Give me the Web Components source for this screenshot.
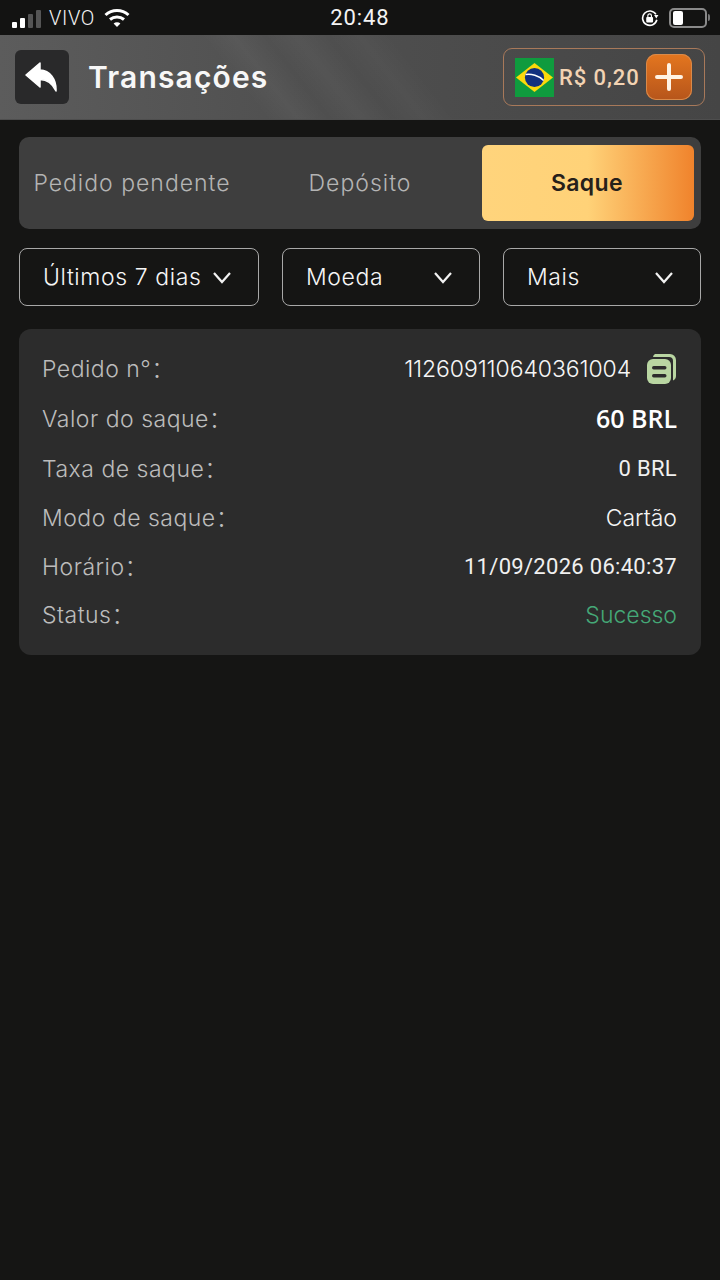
<!DOCTYPE html>
<html lang="pt-BR">
<head>
<meta charset="utf-8">
<title>Transações</title>
<style>
  html, body { margin: 0; height: 100%; }
  body {
    width: 720px;
    height: 1280px;
    overflow: hidden;
    background: #151514;
    font-family: Inter, "Noto Sans", "Noto Sans CJK SC", sans-serif;
    color: #fff;
  }
</style>
</head>
<body>
<status-bar></status-bar>
<app-header title-text="Transações" balance="R$ 0,20"></app-header>
<tab-bar>
  <tab-item style="width:226px">Pedido pendente</tab-item>
  <tab-item style="width:226px;padding-left:4px">Depósito</tab-item>
  <tab-item active style="width:212px">Saque</tab-item>
</tab-bar>
<filter-row>
  <filter-select style="width:240px">Últimos 7 dias</filter-select>
  <filter-select style="width:198px">Moeda</filter-select>
  <filter-select style="width:198px">Mais</filter-select>
</filter-row>
<order-card>
  <order-row label="Pedido n°" h="51" copy>112609110640361004</order-row>
  <order-row label="Valor do saque" h="50" strong>60 BRL</order-row>
  <order-row label="Taxa de saque" h="50" roboto>0 BRL</order-row>
  <order-row label="Modo de saque" h="48">Cartão</order-row>
  <order-row label="Horário" h="49" roboto>11/09/2026 06:40:37</order-row>
  <order-row label="Status" h="48" ok>Sucesso</order-row>
</order-card>

<script>
class StatusBar extends HTMLElement {
  constructor() {
    super();
    this.attachShadow({ mode: 'open' });
    this.shadowRoot.innerHTML = `
      <style>
        :host {
          display: flex;
          align-items: center;
          height: 35px;
          padding: 0 0 0 12px;
          background: #131312;
          font-family: Roboto, sans-serif;
          color: #f4f4f4;
          position: relative;
        }
        .signal { display: flex; align-items: flex-end; gap: 3px; height: 19px; margin-top: 1px; }
        .signal i { width: 5px; background: #fff; border-radius: 1px; }
        .signal i.off { background: #555; }
        .carrier { font-size: 20px; font-weight: 300; margin-left: 8px; letter-spacing: .6px; }
        .wifi { margin-left: 9px; }
        .time {
          position: absolute; left: 0; right: 0; top: 5px;
          text-align: center; font-size: 22px; font-weight: 400; letter-spacing: .9px; line-height: 26px;
        }
        .right { margin-left: auto; display: flex; align-items: center; margin-right: 10px; }
        .batt {
          margin-left: 10px; border: 2px solid #8a8a8a; border-radius: 5px;
          padding: 1px 2px; width: 30px; height: 14px;
        }
        .batt b { display: block; width: 10px; height: 14px; background: #fff; border-radius: 2px; }
        .nub { width: 2px; height: 7px; background: #777; margin-left: 1px; border-radius: 0 2px 2px 0; }
      </style>
      <div class="signal">
        <i style="height:6px"></i><i style="height:10px"></i><i class="off" style="height:14px"></i><i class="off" style="height:18px"></i>
      </div>
      <span class="carrier">VIVO</span>
      <svg class="wifi" width="26" height="20" viewBox="0 0 26 20" fill="none" stroke="#fff" stroke-width="3">
        <path d="M1.5 7 C8 1 18 1 24.5 7"/>
        <path d="M6 11.5 C10 8 16 8 20 11.5"/>
        <path d="M13 19 L9.6 15.4 C11.5 13.8 14.5 13.8 16.4 15.4 Z" fill="#fff" stroke="none"/>
      </svg>
      <span class="time">20:48</span>
      <div class="right">
        <svg width="18" height="18" viewBox="0 0 20 20" fill="none">
          <path d="M16.6 6 A8 8 0 1 0 17.6 12" stroke="#fff" stroke-width="1.8"/>
          <path d="M14.6 6.6 L19.4 6.8 L17 10.6 Z" fill="#fff"/>
          <rect x="5.8" y="9" width="7.6" height="6" rx="1" fill="#fff"/>
          <path d="M7.6 9 V7.4 a2 2 0 0 1 4 0 V9" stroke="#fff" stroke-width="1.3"/>
        </svg>
        <div class="batt"><b></b></div>
        <div class="nub"></div>
      </div>`;
  }
}
customElements.define('status-bar', StatusBar);

class AppHeader extends HTMLElement {
  constructor() {
    super();
    this.attachShadow({ mode: 'open' });
    this.shadowRoot.innerHTML = `
      <style>
        :host {
          display: flex;
          align-items: center;
          height: 85px;
          box-sizing: border-box;
          padding: 0 15px;
          background:
            linear-gradient(52deg,
              rgba(255,255,255,0) 34%, rgba(255,255,255,.035) 38%, rgba(255,255,255,0) 42%,
              rgba(255,255,255,.03) 46%, rgba(255,255,255,0) 50%,
              rgba(255,255,255,.025) 54%, rgba(255,255,255,0) 58%),
            linear-gradient(90deg, #5c5c5c 0%, #505050 40%, #454545 100%);
          border-bottom: 1px solid #4e4e4e;
        }
        .back {
          width: 54px; height: 54px; border-radius: 6px; background: #29292a;
          display: flex; align-items: center; justify-content: center;
        }
        h1 {
          margin: 0 0 0 19px; font-size: 30px; font-weight: 600; letter-spacing: 1.15px; color: #f7f7f7;
        }
        .wallet {
          margin-left: auto;
          width: 202px; height: 58px; box-sizing: border-box;
          border: 1px solid #a8795a; border-radius: 9px;
          display: flex; align-items: center; padding: 0 12px 0 11px;
        }
        .amount {
          font-family: Roboto, sans-serif; font-size: 22px; font-weight: 500;
          color: #f2d3b3; margin-left: 5px; letter-spacing: .9px; white-space: nowrap;
        }
        .plus {
          margin-left: auto; width: 46px; height: 46px; border-radius: 10px;
          background: linear-gradient(180deg, #e4761f, #b6551b);
          box-shadow: inset 0 0 0 1px #d98a4a;
          display: flex; align-items: center; justify-content: center;
        }
      </style>
      <div class="back">
        <svg width="34" height="30" viewBox="0 0 34 30">
          <path fill="#fff" d="M15 1 L1 13 L15 25 V17.5 C22 17.5 27 20.5 31 29 C31.5 17 25 8.5 15 8 Z" stroke="#fff" stroke-linejoin="round" stroke-width="1.5"/>
        </svg>
      </div>
      <h1></h1>
      <div class="wallet">
        <svg width="39" height="39" viewBox="0 0 39 39" style="flex:none">
          <rect width="39" height="39" fill="#0f9b3e"/>
          <path d="M19.5 5 L38 19.5 L19.5 34 L1 19.5 Z" fill="#fbd90b"/>
          <circle cx="19.5" cy="19.5" r="9.6" fill="#12307f"/>
          <path d="M10.5 16.5 C16 15.5 24 17.5 28.6 22.4" fill="none" stroke="#fff" stroke-width="1.4"/>
        </svg>
        <span class="amount"></span>
        <div class="plus">
          <svg width="28" height="28" viewBox="0 0 28 28"><path d="M14 2 V26 M2 14 H26" stroke="#fff3e4" stroke-width="4" stroke-linecap="round"/></svg>
        </div>
      </div>`;
  }
  connectedCallback() {
    this.shadowRoot.querySelector('h1').textContent = this.getAttribute('title-text');
    this.shadowRoot.querySelector('.amount').textContent = this.getAttribute('balance');
  }
}
customElements.define('app-header', AppHeader);

class TabBar extends HTMLElement {
  constructor() {
    super();
    this.attachShadow({ mode: 'open' });
    this.shadowRoot.innerHTML = `
      <style>
        :host {
          display: flex;
          margin: 17px 19px 0;
          height: 92px;
          padding: 8px 7px 8px 0;
          box-sizing: border-box;
          background: #3e3e3e;
          border-radius: 10px;
        }
        ::slotted(tab-item) { flex: none; }
      </style>
      <slot></slot>`;
  }
}
customElements.define('tab-bar', TabBar);

class TabItem extends HTMLElement {
  constructor() {
    super();
    this.attachShadow({ mode: 'open' });
    this.shadowRoot.innerHTML = `
      <style>
        :host {
          display: flex; align-items: center; justify-content: center;
          font-size: 23px; font-weight: 300; color: #b4b4b4; white-space: nowrap; letter-spacing: 1px;
          border-radius: 6px; box-sizing: border-box;
        }
        :host([active]) {
          background: linear-gradient(90deg, #ffd47c 0%, #ffd278 50%, #f0832c 100%);
          color: #26201a; font-weight: 600; letter-spacing: .4px;
          margin-left: 11px; padding-right: 2px;
        }
      </style>
      <slot></slot>`;
  }
}
customElements.define('tab-item', TabItem);

class FilterRow extends HTMLElement {
  constructor() {
    super();
    this.attachShadow({ mode: 'open' });
    this.shadowRoot.innerHTML = `
      <style>
        :host { display: flex; gap: 23px; margin: 19px 19px 0; }
        ::slotted(filter-select) { flex: none; }
      </style>
      <slot></slot>`;
  }
}
customElements.define('filter-row', FilterRow);

class FilterSelect extends HTMLElement {
  constructor() {
    super();
    this.attachShadow({ mode: 'open' });
    this.shadowRoot.innerHTML = `
      <style>
        :host {
          display: flex; align-items: center; justify-content: space-between;
          height: 58px; box-sizing: border-box; padding: 0 26px 0 23px;
          border: 1px solid #a8a8a8; border-radius: 8px;
          font-size: 23px; font-weight: 300; color: #f6f6f6; letter-spacing: .6px; white-space: nowrap;
        }
        svg { flex: none; margin-top: 1px; }
      </style>
      <slot></slot>
      <svg width="20" height="13" viewBox="0 0 20 13" fill="none">
        <path d="M2 2 L10 11 L18 2" stroke="#f2f2f2" stroke-width="2.2"/>
      </svg>`;
  }
}
customElements.define('filter-select', FilterSelect);

class OrderCard extends HTMLElement {
  constructor() {
    super();
    this.attachShadow({ mode: 'open' });
    this.shadowRoot.innerHTML = `
      <style>
        :host {
          display: block; margin: 23px 19px 0; height: 326px; box-sizing: border-box;
          padding: 14px 24px 0 23px;
          background: #2c2c2c; border-radius: 12px;
        }
      </style>
      <slot></slot>`;
  }
}
customElements.define('order-card', OrderCard);

class OrderRow extends HTMLElement {
  constructor() {
    super();
    this.attachShadow({ mode: 'open' });
    this.shadowRoot.innerHTML = `
      <style>
        :host {
          display: flex; align-items: center; justify-content: space-between;
          font-size: 23px; font-weight: 300; color: #bcbcbc; white-space: nowrap;
        }
        .label { letter-spacing: .5px; line-height: 30px; }
        .value { color: #f6f6f6; display: flex; align-items: center; line-height: 30px; letter-spacing: 0; }
        :host([copy]) .value { letter-spacing: -.1px; }
        :host([strong]) .value { font-weight: 600; font-size: 25px; font-family: "Open Sans", sans-serif; color: #fff; padding-bottom: 2px; }
        :host([roboto]) .value { font-family: Roboto, sans-serif; font-size: 22px; font-weight: 400; letter-spacing: .3px; color: #f0f0f0; }
        :host([ok]) .value { color: #45a877; }
        svg { display: none; margin-left: 15px; }
        :host([copy]) svg { display: block; }
      </style>
      <span class="label"></span>
      <span class="value"><slot></slot>
        <svg width="31" height="31" viewBox="0 0 31 31">
          <path d="M9 1 H24 a6 6 0 0 1 6 6 V23 a5 5 0 0 1 -3 4.5 V8 a4 4 0 0 0 -4 -4 H7 a4 4 0 0 1 2 -3 Z" fill="#b9d6a2"/>
          <rect x="1" y="6" width="24" height="25" rx="6" fill="#b9d6a2"/>
          <rect x="6" y="13" width="14.5" height="3.4" rx="1.7" fill="#2c2c2c"/>
          <rect x="6" y="21" width="14.5" height="3.4" rx="1.7" fill="#2c2c2c"/>
        </svg>
      </span>`;
  }
  connectedCallback() {
    this.shadowRoot.querySelector('.label').textContent = this.getAttribute('label') + '：';
    this.style.height = this.getAttribute('h') + 'px';
  }
}
customElements.define('order-row', OrderRow);
</script>
</body>
</html>
